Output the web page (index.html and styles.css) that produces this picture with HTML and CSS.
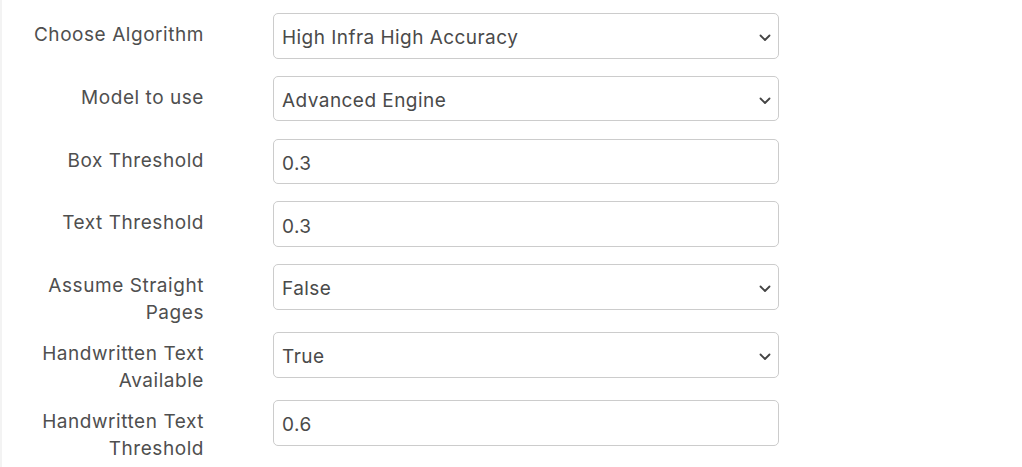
FILE: index.html
```html
<!DOCTYPE html>
<html lang="en">
<head>
<meta charset="utf-8">
<title>Settings</title>
<link rel="stylesheet" href="styles.css">
</head>
<body>
<form class="panel">
  <div class="row">
    <label class="label" for="algo">Choose Algorithm</label>
    <div class="field">
      <div class="control-wrap">
        <select id="algo" class="control"><option>High Infra High Accuracy</option></select>
        <svg class="chev" viewBox="0 0 12 8" width="12" height="8"><polyline points="1.5,1.5 6,6 10.5,1.5" fill="none" stroke="#444" stroke-width="1.8" stroke-linecap="round" stroke-linejoin="round"/></svg>
      </div>
    </div>
  </div>
  <div class="row">
    <label class="label" for="model">Model to use</label>
    <div class="field">
      <div class="control-wrap">
        <select id="model" class="control"><option>Advanced Engine</option></select>
        <svg class="chev" viewBox="0 0 12 8" width="12" height="8"><polyline points="1.5,1.5 6,6 10.5,1.5" fill="none" stroke="#444" stroke-width="1.8" stroke-linecap="round" stroke-linejoin="round"/></svg>
      </div>
    </div>
  </div>
  <div class="row">
    <label class="label" for="box">Box Threshold</label>
    <div class="field">
      <input id="box" class="control" type="text" value="0.3">
    </div>
  </div>
  <div class="row">
    <label class="label" for="text">Text Threshold</label>
    <div class="field">
      <input id="text" class="control" type="text" value="0.3">
    </div>
  </div>
  <div class="row">
    <label class="label" for="straight">Assume Straight<br>Pages</label>
    <div class="field">
      <div class="control-wrap">
        <select id="straight" class="control"><option>False</option></select>
        <svg class="chev" viewBox="0 0 12 8" width="12" height="8"><polyline points="1.5,1.5 6,6 10.5,1.5" fill="none" stroke="#444" stroke-width="1.8" stroke-linecap="round" stroke-linejoin="round"/></svg>
      </div>
    </div>
  </div>
  <div class="row">
    <label class="label" for="hw">Handwritten Text<br>Available</label>
    <div class="field">
      <div class="control-wrap">
        <select id="hw" class="control"><option>True</option></select>
        <svg class="chev" viewBox="0 0 12 8" width="12" height="8"><polyline points="1.5,1.5 6,6 10.5,1.5" fill="none" stroke="#444" stroke-width="1.8" stroke-linecap="round" stroke-linejoin="round"/></svg>
      </div>
    </div>
  </div>
  <div class="row">
    <label class="label" for="hwt">Handwritten Text<br>Threshold</label>
    <div class="field">
      <input id="hwt" class="control" type="text" value="0.6">
    </div>
  </div>
</form>
</body>
</html>
```

FILE: styles.css
```css
html, body {
  margin: 0;
  padding: 0;
  background: #ffffff;
}

body {
  font-family: "Inter", "Open Sans", sans-serif;
  color: #4d4d4d;
  height: 467px;
  overflow: hidden;
}

.panel {
  border-left: 2px solid #f3f3f3;
  padding-top: 13px;
  min-height: 454px;
}

.row {
  display: flex;
  align-items: flex-start;
  gap: 69px;
}

.label {
  width: 202px;
  box-sizing: border-box;
  text-align: right;
  font-size: 19px;
  line-height: 27px;
  padding-top: 8px;
  padding-bottom: 6px;
  color: #4f4f4f;
  letter-spacing: 0.55px;
}

.field {
  width: 506px;
  padding-bottom: 17.25px;
}

.control-wrap {
  position: relative;
}

.control {
  display: block;
  width: 100%;
  height: 45.5px;
  box-sizing: border-box;
  border: 1px solid #cccccc;
  border-radius: 5px;
  background: #ffffff;
  padding: 4px 8px 0;
  margin: 0;
  font-family: inherit;
  font-size: 19px;
  letter-spacing: 0.45px;
  color: #4a4a4a;
  -webkit-appearance: none;
  appearance: none;
  outline: none;
}

.chev {
  position: absolute;
  right: 8px;
  top: 21px;
  width: 12px;
  height: 8px;
  pointer-events: none;
}
```
